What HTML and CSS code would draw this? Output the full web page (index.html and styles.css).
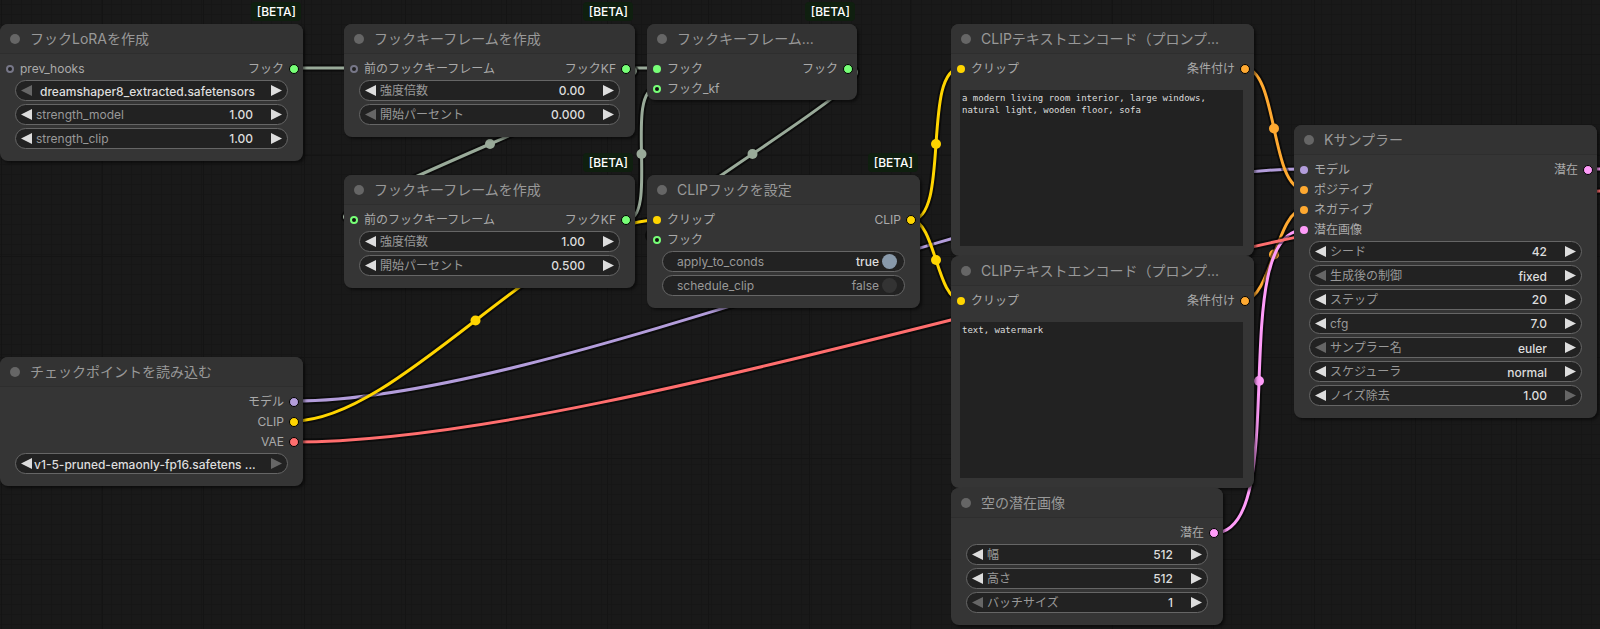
FILE: index.html
```html
<!DOCTYPE html>
<html lang="ja">
<head>
<meta charset="utf-8">
<title>ワークフロー</title>
<link rel="stylesheet" href="styles.css">
</head>
<body>
<main class="canvas">
  <svg class="links" aria-hidden="true">
    <defs>
      <path id="l-hook" d="M294 68H657"/>
      <path id="l-kf" d="M626 68C704 68 276 220 354 220"/>
      <path id="l-kf2" d="M626 220C660 220 623 88 657 88"/>
      <path id="l-hooks" d="M848 68C912 68 593 240 657 240"/>
      <path id="l-clip" d="M294 421C398 421 553 220 657 220"/>
      <path id="l-pos" d="M911 220C951 220 921 68 961 68"/>
      <path id="l-neg" d="M911 220C935 220 937 300 961 300"/>
      <path id="l-model" d="M294 401C553 401 1045 169 1304 169"/>
      <path id="l-vae" d="M294 442C636 442 1298 190 1640 190"/>
      <path id="l-cpos" d="M1244 68C1278 68 1270 189 1304 189"/>
      <path id="l-cneg" d="M1244 300C1271 300 1277 209 1304 209"/>
      <path id="l-latent" d="M1214 533C1293 533 1225 230 1304 230"/>
      <path id="l-out" d="M1588 169H1640"/>
    </defs>
    <g class="hook"><use class="edge" href="#l-hook"/><use href="#l-hook"/></g>
    <g class="hook"><use class="edge" href="#l-kf"/><use href="#l-kf"/><circle cx="490" cy="144" r="5"/></g>
    <g class="hook"><use class="edge" href="#l-kf2"/><use href="#l-kf2"/><circle cx="641.500" cy="154" r="5"/></g>
    <g class="hook"><use class="edge" href="#l-hooks"/><use href="#l-hooks"/><circle cx="752.500" cy="154" r="5"/></g>
    <g class="model"><use class="edge" href="#l-model"/><use href="#l-model"/></g>
    <g class="clip"><use class="edge" href="#l-clip"/><use href="#l-clip"/><circle cx="475.500" cy="320.500" r="5"/></g>
    <g class="clip"><use class="edge" href="#l-pos"/><use href="#l-pos"/><circle cx="936" cy="144" r="5"/></g>
    <g class="clip"><use class="edge" href="#l-neg"/><use href="#l-neg"/><circle cx="936" cy="260" r="5"/></g>
    <g class="cond"><use class="edge" href="#l-cpos"/><use href="#l-cpos"/><circle cx="1274" cy="128.500" r="5"/></g>
    <g class="cond"><use class="edge" href="#l-cneg"/><use href="#l-cneg"/><circle cx="1274" cy="254.500" r="5"/></g>
    <g class="latent"><use class="edge" href="#l-latent"/><use href="#l-latent"/><circle cx="1259" cy="381" r="5"/></g>
    <g class="latent"><use class="edge" href="#l-out"/><use href="#l-out"/></g>
    <g class="vae"><use class="edge" href="#l-vae"/><use href="#l-vae"/></g>
  </svg>

  <section class="node" style="left:0px;top:24px;width:303px">
    <span class="badge">[BETA]</span>
    <h2 class="title">フックLoRAを作成</h2>
    <div class="slots">
      <div class="slot"><span class="in optional">prev_hooks</span><span class="out hook">フック</span></div>
    </div>
    <div class="widgets">
      <div class="widget"><button class="prev off" aria-label="前へ"></button><select class="file" aria-label="LoRA"><option>dreamshaper8_extracted.safetensors</option></select><button class="next" aria-label="次へ"></button></div>
      <div class="widget"><button class="prev" aria-label="減らす"></button><label for="sm">strength_model</label><input id="sm" value="1.00"><button class="next" aria-label="増やす"></button></div>
      <div class="widget"><button class="prev" aria-label="減らす"></button><label for="sc">strength_clip</label><input id="sc" value="1.00"><button class="next" aria-label="増やす"></button></div>
    </div>
  </section>

  <section class="node" style="left:344px;top:24px;width:291px">
    <span class="badge">[BETA]</span>
    <h2 class="title">フックキーフレームを作成</h2>
    <div class="slots">
      <div class="slot"><span class="in optional">前のフックキーフレーム</span><span class="out hook">フックKF</span></div>
    </div>
    <div class="widgets">
      <div class="widget"><button class="prev" aria-label="減らす"></button><label for="k1">強度倍数</label><input id="k1" value="0.00"><button class="next" aria-label="増やす"></button></div>
      <div class="widget"><button class="prev off" aria-label="減らす"></button><label for="k2">開始パーセント</label><input id="k2" value="0.000"><button class="next" aria-label="増やす"></button></div>
    </div>
  </section>

  <section class="node" style="left:344px;top:175px;width:291px">
    <span class="badge">[BETA]</span>
    <h2 class="title">フックキーフレームを作成</h2>
    <div class="slots">
      <div class="slot"><span class="in hook ring">前のフックキーフレーム</span><span class="out hook">フックKF</span></div>
    </div>
    <div class="widgets">
      <div class="widget"><button class="prev" aria-label="減らす"></button><label for="k3">強度倍数</label><input id="k3" value="1.00"><button class="next" aria-label="増やす"></button></div>
      <div class="widget"><button class="prev" aria-label="減らす"></button><label for="k4">開始パーセント</label><input id="k4" value="0.500"><button class="next" aria-label="増やす"></button></div>
    </div>
  </section>

  <section class="node" style="left:647px;top:24px;width:210px">
    <span class="badge">[BETA]</span>
    <h2 class="title">フックキーフレーム...</h2>
    <div class="slots">
      <div class="slot"><span class="in hook">フック</span><span class="out hook">フック</span></div>
      <div class="slot"><span class="in hook ring">フック_kf</span></div>
    </div>
  </section>

  <section class="node" style="left:647px;top:175px;width:273px">
    <span class="badge">[BETA]</span>
    <h2 class="title">CLIPフックを設定</h2>
    <div class="slots">
      <div class="slot"><span class="in clip">クリップ</span><span class="out clip">CLIP</span></div>
      <div class="slot"><span class="in hook ring">フック</span></div>
    </div>
    <div class="widgets">
      <div class="widget toggle"><label for="ac">apply_to_conds</label><span class="state on">true</span><input type="checkbox" id="ac" checked></div>
      <div class="widget toggle"><label for="sch">schedule_clip</label><span class="state">false</span><input type="checkbox" id="sch"></div>
    </div>
  </section>

  <section class="node" style="left:0px;top:357px;width:303px">
    <h2 class="title">チェックポイントを読み込む</h2>
    <div class="slots">
      <div class="slot"><span class="out model">モデル</span></div>
      <div class="slot"><span class="out clip">CLIP</span></div>
      <div class="slot"><span class="out vae">VAE</span></div>
    </div>
    <div class="widgets">
      <div class="widget"><button class="prev" aria-label="前へ"></button><select class="file" aria-label="チェックポイント"><option>v1-5-pruned-emaonly-fp16.safetens ...</option></select><button class="next off" aria-label="次へ"></button></div>
    </div>
  </section>

  <section class="node" style="left:951px;top:24px;width:303px">
    <h2 class="title">CLIPテキストエンコード（プロンプ...</h2>
    <div class="slots">
      <div class="slot"><span class="in clip">クリップ</span><span class="out cond">条件付け</span></div>
    </div>
    <textarea class="prompt" rows="13" aria-label="ポジティブプロンプト" spellcheck="false">a modern living room interior, large windows, natural light, wooden floor, sofa</textarea>
  </section>

  <section class="node" style="left:951px;top:256px;width:303px">
    <h2 class="title">CLIPテキストエンコード（プロンプ...</h2>
    <div class="slots">
      <div class="slot"><span class="in clip">クリップ</span><span class="out cond">条件付け</span></div>
    </div>
    <textarea class="prompt" rows="13" aria-label="ネガティブプロンプト" spellcheck="false">text, watermark</textarea>
  </section>

  <section class="node" style="left:951px;top:488px;width:272px">
    <h2 class="title">空の潜在画像</h2>
    <div class="slots">
      <div class="slot"><span class="out latent">潜在</span></div>
    </div>
    <div class="widgets">
      <div class="widget"><button class="prev" aria-label="減らす"></button><label for="w">幅</label><input id="w" value="512"><button class="next" aria-label="増やす"></button></div>
      <div class="widget"><button class="prev" aria-label="減らす"></button><label for="h">高さ</label><input id="h" value="512"><button class="next" aria-label="増やす"></button></div>
      <div class="widget"><button class="prev off" aria-label="減らす"></button><label for="b">バッチサイズ</label><input id="b" value="1"><button class="next" aria-label="増やす"></button></div>
    </div>
  </section>

  <section class="node" style="left:1294px;top:125px;width:303px">
    <h2 class="title">Kサンプラー</h2>
    <div class="slots">
      <div class="slot"><span class="in model">モデル</span><span class="out latent">潜在</span></div>
      <div class="slot"><span class="in cond">ポジティブ</span></div>
      <div class="slot"><span class="in cond">ネガティブ</span></div>
      <div class="slot"><span class="in latent">潜在画像</span></div>
    </div>
    <div class="widgets">
      <div class="widget"><button class="prev" aria-label="減らす"></button><label for="s1">シード</label><input id="s1" value="42"><button class="next" aria-label="増やす"></button></div>
      <div class="widget"><button class="prev off" aria-label="前へ"></button><label for="s2">生成後の制御</label><select id="s2"><option>fixed</option></select><button class="next" aria-label="次へ"></button></div>
      <div class="widget"><button class="prev" aria-label="減らす"></button><label for="s3">ステップ</label><input id="s3" value="20"><button class="next" aria-label="増やす"></button></div>
      <div class="widget"><button class="prev" aria-label="減らす"></button><label for="s4">cfg</label><input id="s4" value="7.0"><button class="next" aria-label="増やす"></button></div>
      <div class="widget"><button class="prev off" aria-label="前へ"></button><label for="s5">サンプラー名</label><select id="s5"><option>euler</option></select><button class="next" aria-label="次へ"></button></div>
      <div class="widget"><button class="prev" aria-label="前へ"></button><label for="s6">スケジューラ</label><select id="s6"><option>normal</option></select><button class="next" aria-label="次へ"></button></div>
      <div class="widget"><button class="prev" aria-label="減らす"></button><label for="s7">ノイズ除去</label><input id="s7" value="1.00"><button class="next off" aria-label="増やす"></button></div>
    </div>
  </section>
</main>
</body>
</html>
```
FILE: styles.css
```css
*, *::before, *::after { box-sizing: border-box; }

body {
  margin: 0;
  font: 12px/20px Inter, "Noto Sans CJK JP", sans-serif;
  color: #aaa;
}

.canvas {
  position: relative;
  min-height: 100vh;
  overflow: hidden;
  background-color: #191919;
  background-image:
    linear-gradient(#141414 1px, transparent 1px),
    linear-gradient(90deg, #141414 1px, transparent 1px),
    linear-gradient(#161616 1px, transparent 1px),
    linear-gradient(90deg, #161616 1px, transparent 1px);
  background-size: 101px 101px, 101px 101px, 10px 10px, 10px 10px;
  background-position: 0 54px, 1px 0, 0 4px, 1px 0;
}

.hook { --c: #7f7; }
.clip { --c: #ffd500; }
.model { --c: #b39ddb; }
.vae { --c: #ff6e6e; }
.cond { --c: #ffa931; }
.latent { --c: #ff9cf9; }

.links {
  position: absolute;
  inset: 0;
  width: 100%;
  height: 100%;
  fill: none;
  stroke-width: 3px;
}
.links g { stroke: var(--c); }
.links .hook { --c: #9a9; }
.links .edge { stroke: rgba(0, 0, 0, 0.5); stroke-width: 7px; }
.links circle { fill: var(--c); stroke: none; }

.node {
  position: absolute;
  padding-bottom: 1px;
  border-radius: 8px;
  background: #353535;
  box-shadow: 2px 2px 3px rgba(0, 0, 0, 0.5);
}

.badge {
  position: absolute;
  right: 2px;
  bottom: 100%;
  margin-bottom: 3px;
  padding: 0 5px 0 6px;
  border-radius: 4px;
  background: #0f1f0f;
  color: #fff;
  font-weight: 500;
  line-height: 19px;
}

.title {
  display: flex;
  align-items: center;
  gap: 10px;
  height: 30px;
  margin: 0;
  padding-left: 10px;
  border-radius: 8px 8px 0 0;
  border-bottom: 1px solid #2e2e2e;
  background: #333;
  color: #999;
  font-size: 14px;
  font-weight: 400;
  white-space: nowrap;
}
.title::before {
  content: "";
  width: 10px;
  height: 10px;
  border-radius: 50%;
  background: #666;
}

.slots { padding: 5px 4px 0 6px; }
.slot { display: flex; height: 20px; }
.in, .out { display: flex; align-items: center; gap: 6px; }
.out { margin-left: auto; flex-direction: row-reverse; gap: 5px; }
.in::before, .out::after { content: ""; order: -1; border-radius: 50%; }
.in::before { width: 8px; height: 8px; background: var(--c); }
.in.ring::before { background: #111; border: 2px solid var(--c); }
.in.optional::before { background: #222; border: 2px solid #778; }
.out::after { width: 10px; height: 10px; border: 1px solid #000; background: var(--c); }

.widgets {
  display: grid;
  gap: 3px;
  padding: 1px 15px 11px;
}
.widget {
  display: flex;
  align-items: center;
  height: 21px;
  padding: 0 5px;
  border: 1px solid #666;
  border-radius: 11px;
  background: #222;
  color: #999;
}
.widget input, .widget select {
  flex: 1;
  min-width: 0;
  width: 0;
  height: 18px;
  margin: 0 18px 0 0;
  padding: 0;
  border: 0;
  background: none;
  color: #ddd;
  font: inherit;
  font-weight: 500;
  text-align: right;
  text-align-last: right;
  appearance: none;
  outline: 0;
}
.widget .file { margin: 0 16px 0 -2px; text-overflow: clip; }
.prev, .next {
  flex: none;
  width: 11px;
  height: 11px;
  padding: 0;
  border: 0;
  background: #ddd;
}
.prev { margin-right: 4px; clip-path: polygon(100% 0, 0 50%, 100% 100%); }
.next { clip-path: polygon(0 0, 100% 50%, 0 100%); }
.prev.off, .next.off { background: #666; }

.widget.toggle { padding: 0 7px 0 14px; }
.toggle .state { margin: 0 3px 0 auto; }
.toggle .on { color: #ddd; font-weight: 500; }
.widget.toggle input {
  flex: none;
  width: 15px;
  height: 15px;
  margin: 0;
  border-radius: 50%;
  background: #333;
}
.widget.toggle input:checked { background: #89a; }

.prompt {
  display: block;
  width: calc(100% - 20px);
  margin: 11px 0 9px 9px;
  padding: 2px 2px 0;
  height: 156px;
  border: 0;
  background: #222;
  color: #ddd;
  font: 9px/12px "DejaVu Sans Mono", monospace;
  resize: none;
  outline: 0;
}
```
